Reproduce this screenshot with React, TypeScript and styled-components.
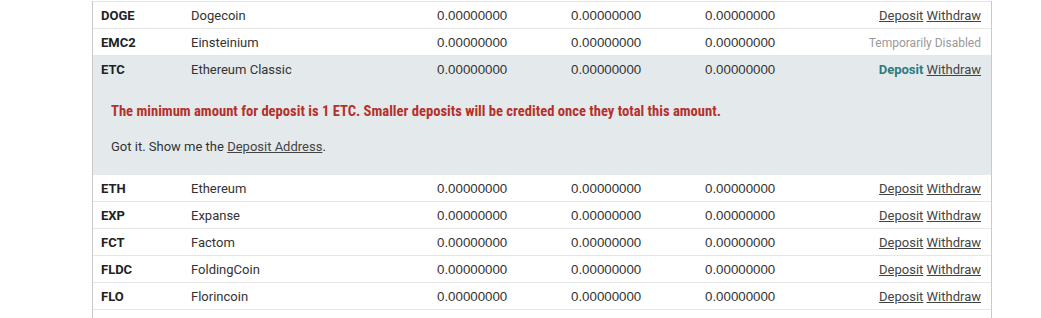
import React from "react";
import styled, { createGlobalStyle } from "styled-components";

const Global = createGlobalStyle`
  html, body { margin: 0; padding: 0; background: #ffffff; }
  body { font-family: Roboto, "Liberation Sans", sans-serif; font-size: 13px; color: #333; }
`;

const Page = styled.div`
  padding: 1px 0 0 92px;
`;

const Table = styled.div`
  width: 898px;
  border-left: 1px solid #c9c9c9;
  border-right: 1px solid #c9c9c9;
`;

const Row = styled.div<{ $active?: boolean; $noLine?: boolean }>`
  display: grid;
  grid-template-columns: 98px 246px 134px 134px 134px 1fr;
  align-items: center;
  height: 26px;
  border-top: 1px solid ${(p) => (p.$noLine ? "#e4eaec" : "#e6e6e6")};
  background: ${(p) => (p.$active ? "#e4eaec" : "#ffffff")};
`;

const Code = styled.div`
  padding-left: 8px;
  font-weight: 700;
  color: #222;
`;

const Name = styled.div`
  color: #333;
`;

const Num = styled.div`
  font-family: "Liberation Sans", Arial, sans-serif;
  font-size: 13.3px;
  color: #333;
`;

const Actions = styled.div`
  padding-right: 10px;
  text-align: right;
  white-space: nowrap;
`;

const Link = styled.a<{ $strong?: boolean }>`
  color: ${(p) => (p.$strong ? "#2b7b80" : "#444")};
  font-weight: ${(p) => (p.$strong ? 700 : 400)};
  text-decoration: ${(p) => (p.$strong ? "none" : "underline")};
  cursor: pointer;
`;

const Disabled = styled.span`
  color: #9a9a9a;
  font-size: 12px;
`;

const Expanded = styled.div`
  background: #e4eaec;
  padding: 21px 18px 18px;
  height: 53px;
`;

const Warn = styled.p`
  margin: 0;
  line-height: 16px;
  font-family: "Liberation Sans Narrow", "Roboto Condensed", Roboto, sans-serif;
  font-weight: 700;
  font-size: 14.6px;
  color: #b5302b;
`;

const Confirm = styled.p`
  margin: 20px 0 0;
  line-height: 16px;
  color: #333;
`;

type Coin = { code: string; name: string; disabled?: boolean };

const before: Coin[] = [
  { code: "DOGE", name: "Dogecoin" },
  { code: "EMC2", name: "Einsteinium", disabled: true },
];
const after: Coin[] = [
  { code: "ETH", name: "Ethereum" },
  { code: "EXP", name: "Expanse" },
  { code: "FCT", name: "Factom" },
  { code: "FLDC", name: "FoldingCoin" },
  { code: "FLO", name: "Florincoin" },
];

const Z = "0.00000000";

function CoinRow({ c, active, noLine }: { c: Coin; active?: boolean; noLine?: boolean }) {
  return (
    <Row $active={active} $noLine={noLine}>
      <Code>{c.code}</Code>
      <Name>{c.name}</Name>
      <Num>{Z}</Num>
      <Num>{Z}</Num>
      <Num>{Z}</Num>
      <Actions>
        {c.disabled ? (
          <Disabled>Temporarily Disabled</Disabled>
        ) : (
          <>
            <Link $strong={active}>Deposit</Link> <Link>Withdraw</Link>
          </>
        )}
      </Actions>
    </Row>
  );
}

export default function App() {
  return (
    <>
      <Global />
      <Page>
        <Table>
          {before.map((c) => (
            <CoinRow key={c.code} c={c} />
          ))}
          <CoinRow c={{ code: "ETC", name: "Ethereum Classic" }} active />
          <Expanded>
            <Warn>
              The minimum amount for deposit is 1 ETC. Smaller deposits will be credited once they total this amount.
            </Warn>
            <Confirm>
              Got it. Show me the <Link>Deposit Address</Link>.
            </Confirm>
          </Expanded>
          {after.map((c, i) => (
            <CoinRow key={c.code} c={c} noLine={i === 0} />
          ))}
          <Row />
        </Table>
      </Page>
    </>
  );
}
